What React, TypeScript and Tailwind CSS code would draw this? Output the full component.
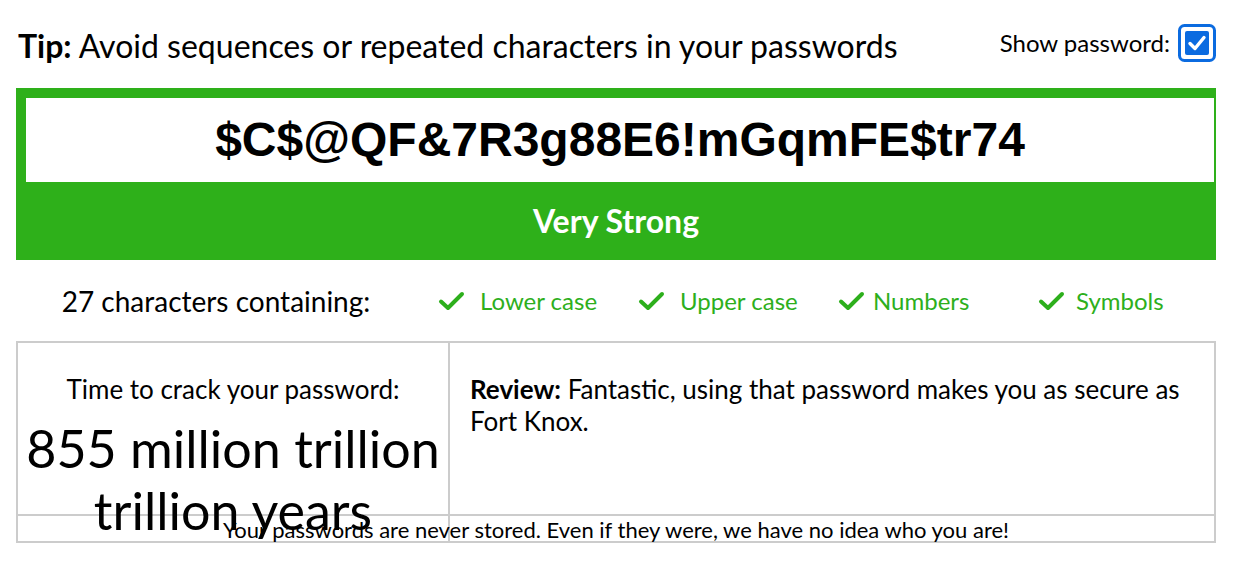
const features = [
  { label: 'Lower case', gap: 'ml-[15px]' },
  { label: 'Upper case', gap: 'ml-[15px]' },
  { label: 'Numbers', gap: 'ml-[8px]' },
  { label: 'Symbols', gap: 'ml-[11px]' },
];

function CheckMark() {
  return (
    <svg width="27" height="20" viewBox="0 0 27 20" className="shrink-0">
      <path d="M3 10.5 L10 17 L24 3" fill="none" stroke="#2daf1c" strokeWidth="4" strokeLinecap="round" strokeLinejoin="round" />
    </svg>
  );
}

function ShowBox() {
  return (
    <svg width="38" height="38" viewBox="0 0 38 38">
      <rect x="1.5" y="1.5" width="35" height="35" rx="5" fill="#fff" stroke="#0b6be0" strokeWidth="3" />
      <rect x="7" y="7" width="24" height="24" rx="2" fill="#0b6be0" />
      <path d="M12 19.5 L17 24.5 L26 13.5" fill="none" stroke="#fff" strokeWidth="3.4" strokeLinecap="round" strokeLinejoin="round" />
    </svg>
  );
}

export default function App() {
  return (
    <div className="w-[1240px] h-[586px] bg-white pl-4 pr-6 font-['Lato','Noto_Sans',sans-serif] text-black">
      <div className="flex items-center justify-between pt-[24px] h-[62px]">
        <div className="text-[32px] leading-[38px] pl-[2px] pt-[6px]">
          <span className="font-bold">Tip:</span> Avoid sequences or repeated characters in your passwords
        </div>
        <label className="flex items-center gap-[8px] text-[24px]">
          Show password:
          <ShowBox />
        </label>
      </div>

      <div className="mt-[26px] bg-[#2eb01a] pt-[10px] pl-[10px] pr-[2px]">
        <div className="h-[84px] bg-white flex items-center justify-center">
          <span className="font-['Liberation_Sans',Arial,sans-serif] font-bold text-[48px] leading-none">
            $C$@QF&amp;7R3g88E6!mGqmFE$tr74
          </span>
        </div>
        <div className="h-[78px] flex items-center justify-center text-white text-[32px] font-bold pr-[8px]">
          Very Strong
        </div>
      </div>

      <div className="h-[81px] flex items-center">
        <div className="w-[400px] text-center text-[28px]">27 characters containing:</div>
        {features.map((f) => (
          <div key={f.label} className="w-[200px] flex items-center pl-[22px]">
            <CheckMark />
            <span className={`${f.gap} text-[24px] text-[#2daf1c]`}>{f.label}</span>
          </div>
        ))}
      </div>

      <div className="border-2 border-[#cccccc]">
        <div className="grid grid-cols-[432px_1fr] h-[171px]">
          <div className="border-r-2 border-[#cccccc] text-center pt-[30px]">
            <div className="text-[26px] leading-[32px]">Time to crack your password:</div>
            <div className="mt-[12px] text-[52px] leading-[62px] relative z-10">855 million trillion trillion years</div>
          </div>
          <div className="pl-[20px] pr-4 pt-[30px] text-[26px] leading-[32px]">
            <span className="font-bold">Review:</span> Fantastic, using that password makes you as secure as Fort Knox.
          </div>
        </div>
        <div className="border-t-2 border-[#cccccc] h-[27px] text-center text-[22px] leading-[28px]">
          Your passwords are never stored. Even if they were, we have no idea who you are!
        </div>
      </div>
    </div>
  );
}
